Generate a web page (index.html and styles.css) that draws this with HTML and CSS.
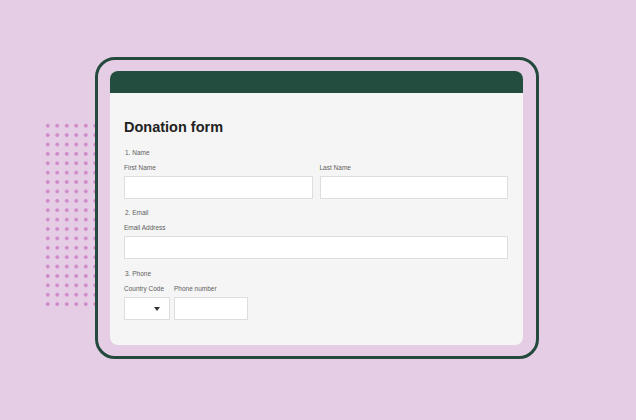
FILE: index.html
```html
<html>
<head>
<meta charset="UTF-8">
<meta name="viewport" content="width=device-width, initial-scale=1.0">
<title>Donation form</title>
<link rel="stylesheet" href="styles.css">
</head>
<body>
<div class="stage">
  <div class="dots"></div>
  <div class="frame">
    <div class="card">
      <div class="card-header"></div>
      <div class="card-body">
        <h1>Donation form</h1>

        <div class="question">
          <div class="q-title">1. Name</div>
          <div class="row two">
            <div class="field">
              <label>First Name</label>
              <div class="input"></div>
            </div>
            <div class="field">
              <label>Last Name</label>
              <div class="input"></div>
            </div>
          </div>
        </div>

        <div class="question">
          <div class="q-title">2. Email</div>
          <div class="field">
            <label>Email Address</label>
            <div class="input"></div>
          </div>
        </div>

        <div class="question">
          <div class="q-title">3. Phone</div>
          <div class="row phone">
            <div class="field">
              <label>Country Code</label>
              <div class="input select">
                <svg width="6" height="4" viewBox="0 0 6 4"><path d="M0 0h6L3 4z" fill="#333"/></svg>
              </div>
            </div>
            <div class="field">
              <label>Phone number</label>
              <div class="input"></div>
            </div>
          </div>
        </div>
      </div>
    </div>
  </div>
</div>
</body>
</html>
```

FILE: styles.css
```css
body {
  margin: 0;
  padding: 0;
  background-color: #e5cde5;
  font-family: "Liberation Sans", Arial, sans-serif;
  width: 636px;
  height: 420px;
  overflow: hidden;
}

.stage {
  position: relative;
  padding: 57px 0 0 95px;
}

/* decorative dot pattern, sits under the frame */
.dots {
  position: absolute;
  left: 43px;
  top: 121px;
  width: 56px;
  height: 188px;
  background-image: radial-gradient(circle, #d08ac9 1.5px, transparent 2.1px);
  background-size: 9.5px 9.4px;
}

.frame {
  position: relative;
  box-sizing: border-box;
  width: 444px;
  height: 302px;
  border: 3px solid #234a3d;
  border-radius: 20px;
  background-color: #e5cde5;
  padding: 11px 13px 11px 12px;
}

.card {
  height: 274px;
  background-color: #f5f5f5;
  border-radius: 8px;
  overflow: hidden;
}

.card-header {
  height: 22px;
  background-color: #234d3f;
}

.card-body {
  padding: 25px 15px 0 14px;
}

h1 {
  margin: 0;
  font-size: 14.5px;
  line-height: 18px;
  font-weight: bold;
  color: #222;
}

.question {
  margin-top: 9px;
}

.question:first-of-type {
  margin-top: 12px;
}

.question:last-child {
  margin-top: 10px;
}

.q-title {
  font-size: 6.5px;
  line-height: 9px;
  color: #5e5e5e;
  padding-left: 1px;
  margin-bottom: 6px;
}

.field label {
  display: block;
  font-size: 6.5px;
  line-height: 9px;
  color: #5e5e5e;
  margin-bottom: 4px;
}

.input {
  box-sizing: border-box;
  height: 23px;
  background-color: #fff;
  border: 1px solid #dedede;
}

.row {
  display: flex;
  gap: 7px;
}

.row.two .field {
  flex: 1;
}

.row.phone {
  gap: 4px;
}

.row.phone .field:first-child {
  width: 46px;
}

.row.phone .field:last-child {
  width: 74px;
}

.select {
  display: flex;
  align-items: center;
  justify-content: flex-end;
  padding-right: 9px;
}
```
